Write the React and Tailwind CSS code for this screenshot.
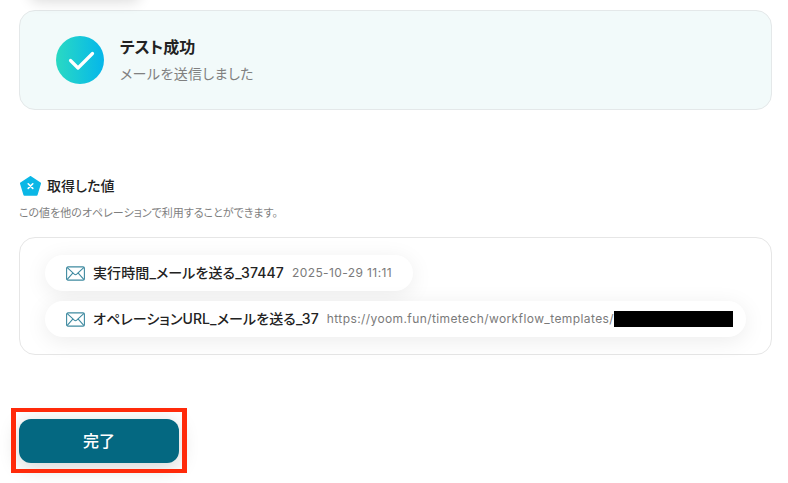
import React from 'react';

const font = "font-['Inter','Noto_Sans_CJK_JP',sans-serif] [font-feature-settings:'palt']";

const MailIcon = () => (
  <svg width="19" height="15" viewBox="0 0 19 15" fill="none" stroke="#3f8aa0" strokeWidth="1.1" className="shrink-0">
    <rect x="0.6" y="0.9" width="17.8" height="13.2" rx="1.4" />
    <path d="M1 1.4 L8.3 8.2 Q9.5 9.2 10.7 8.2 L18 1.4" />
    <path d="M1 13.6 L7 6.8 M18 13.6 L12 6.8" />
  </svg>
);

const ValuePill = ({ label, value, redacted }) => (
  <div className={`flex h-9 w-fit items-center rounded-full bg-white pl-[21px] shadow-[0_4px_22px_rgba(0,0,0,0.08)] ${redacted ? 'pr-[13px]' : 'pr-[21px]'}`}>
    <MailIcon />
    <span className="ml-[8px] whitespace-nowrap text-sm font-medium tracking-[0.1px] text-[#222]">{label}</span>
    <span className="ml-[8px] whitespace-nowrap text-xs tracking-[0.4px] text-[#7a7a7a]">{value}</span>
    {redacted && <span className="h-4 w-[119px] bg-black" />}
  </div>
);

export default function App() {
  return (
    <div className={`${font} relative h-[483px] w-[788px] overflow-hidden bg-white pl-[19px] pr-4 pt-[10px]`}>
      {/* shadow of the element scrolled off the top */}
      <div className="absolute -top-10 left-[30px] h-10 w-[110px] rounded-lg shadow-[0_2px_14px_rgba(0,0,0,0.14)]" />

      <div className="flex h-[100px] items-center rounded-2xl border border-[#e4e8e9] bg-[#f2fafa] pl-[36px]">
        <div className="h-12 w-12 rounded-full bg-gradient-to-r from-[#2ad9c2] to-[#06b6ea]">
          <svg width="48" height="48" viewBox="0 0 48 48" fill="none" stroke="white" strokeWidth="3.2" strokeLinecap="round" strokeLinejoin="round">
            <path d="M14.5 24.5 L22 32 L36.5 17.5" />
          </svg>
        </div>
        <div className="ml-4">
          <p className="mt-px text-base font-semibold leading-5 text-[#222]">テスト成功</p>
          <p className="mt-[7px] text-sm leading-5 tracking-[0.4px] text-[#808080]">メールを送信しました</p>
        </div>
      </div>

      <div className="mt-[66px] flex items-center pl-px">
        <svg width="21" height="20" viewBox="0 0 21 20">
          <path d="M10.5 1 L20 7.4 L16.6 18.8 L4.4 18.8 L1 7.4 Z" fill="#0bb7e6" stroke="#0bb7e6" strokeWidth="2" strokeLinejoin="round" />
          <path d="M8.2 7.8 L12.8 12.4 M12.8 7.8 L8.2 12.4" stroke="white" strokeWidth="1.6" strokeLinecap="round" />
        </svg>
        <h2 className="ml-[6px] text-sm font-medium leading-5 tracking-[0.1px] text-[#222]">取得した値</h2>
      </div>
      <p className="mt-[10px] text-[11px] leading-[14px] text-[#7f7f7f]">この値を他のオペレーションで利用することができます。</p>

      <div className="mt-[17px] flex h-[118px] flex-col gap-[10px] rounded-2xl border border-[#e6e6e6] bg-white pl-[25px] pt-[17px]">
        <ValuePill label="実行時間_メールを送る_37447" value="2025-10-29 11:11" />
        <ValuePill label="オペレーションURL_メールを送る_37" value="https://yoom.fun/timetech/workflow_templates/" redacted />
      </div>

      <button className="mt-16 h-11 w-40 rounded-xl bg-[#046881] text-base font-medium text-white shadow-[0_4px_20px_rgba(0,0,0,0.18)]">完了</button>

      {/* annotation frame */}
      <div className="pointer-events-none absolute left-[11px] top-[408px] h-[65px] w-[176px] border-x-[5px] border-y-4 border-[#ff2a0a]" />
    </div>
  );
}
